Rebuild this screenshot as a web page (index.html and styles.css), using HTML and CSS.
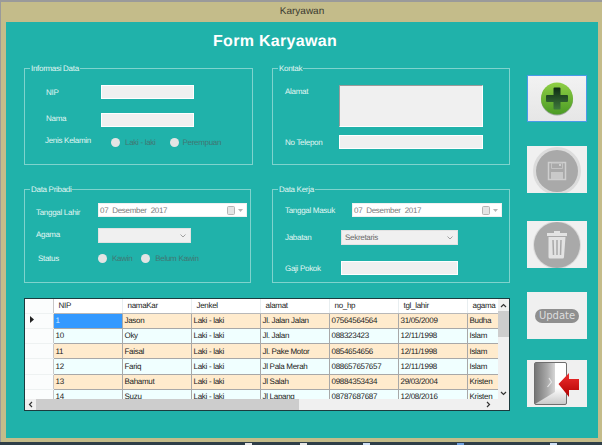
FILE: index.html
```html
<!DOCTYPE html>
<html lang="en">
<head>
    <meta charset="UTF-8">
    <meta name="viewport" content="width=device-width, initial-scale=1.0">
    <title>Karyawan</title>
    <link rel="stylesheet" href="styles.css">
</head>
<body>
    <div class="window">
        <div class="titlebar">Karyawan</div>

        <div class="client">
            <div class="main">
                <h1 class="form-title">Form Karyawan</h1>

                <div class="groups">
                    <!-- Informasi Data -->
                    <div class="group group-info">
                        <span class="group-title">Informasi Data</span>
                        <div class="row row-nip">
                            <label class="lbl lbl-info">NIP</label>
                            <input class="field field-info" type="text" disabled>
                        </div>
                        <div class="row row-nama">
                            <label class="lbl lbl-info">Nama</label>
                            <input class="field field-info" type="text" disabled>
                        </div>
                        <div class="row row-jk">
                            <label class="lbl lbl-jk">Jenis Kelamin</label>
                            <span class="radio jk-laki"><i></i>Laki - laki</span>
                            <span class="radio jk-perempuan"><i></i>Perempuan</span>
                        </div>
                    </div>

                    <!-- Kontak -->
                    <div class="group group-kontak">
                        <span class="group-title">Kontak</span>
                        <div class="row row-alamat">
                            <label class="lbl lbl-kontak">Alamat</label>
                            <textarea class="field area" disabled></textarea>
                        </div>
                        <div class="row row-telp">
                            <label class="lbl lbl-kontak">No Telepon</label>
                            <input class="field field-kontak" type="text" disabled>
                        </div>
                    </div>

                    <!-- Data Pribadi -->
                    <div class="group group-pribadi">
                        <span class="group-title">Data Pribadi</span>
                        <div class="row row-lahir">
                            <label class="lbl lbl-pribadi">Tanggal Lahir</label>
                            <div class="date date-lahir">
                                <span>07 Desember 2017</span>
                                <svg class="date-icon" width="17" height="9" viewBox="0 0 17 9"><rect x="0.5" y="0.5" width="7" height="8" rx="1" fill="#e4e4e4" stroke="#b5b5b5"/><path d="M11 3h5l-2.500 3z" fill="#b5b5b5"/></svg>
                            </div>
                        </div>
                        <div class="row row-agama">
                            <label class="lbl lbl-pribadi">Agama</label>
                            <div class="select select-agama">
                                <span></span>
                                <svg width="6" height="4" viewBox="0 0 6 4"><path d="M.5.5L3 3 5.500.5" fill="none" stroke="#a0a0a0"/></svg>
                            </div>
                        </div>
                        <div class="row row-status">
                            <label class="lbl lbl-status">Status</label>
                            <span class="radio st-kawin"><i></i>Kawin</span>
                            <span class="radio st-belum"><i></i>Belum Kawin</span>
                        </div>
                    </div>

                    <!-- Data Kerja -->
                    <div class="group group-kerja">
                        <span class="group-title">Data Kerja</span>
                        <div class="row row-masuk">
                            <label class="lbl lbl-kerja-date">Tanggal Masuk</label>
                            <div class="date date-masuk">
                                <span>07 Desember 2017</span>
                                <svg class="date-icon" width="17" height="9" viewBox="0 0 17 9"><rect x="0.5" y="0.5" width="7" height="8" rx="1" fill="#e4e4e4" stroke="#b5b5b5"/><path d="M11 3h5l-2.500 3z" fill="#b5b5b5"/></svg>
                            </div>
                        </div>
                        <div class="row row-jabatan">
                            <label class="lbl lbl-kerja">Jabatan</label>
                            <div class="select select-jabatan">
                                <span>Sekretaris</span>
                                <svg width="6" height="4" viewBox="0 0 6 4"><path d="M.5.5L3 3 5.500.5" fill="none" stroke="#a0a0a0"/></svg>
                            </div>
                        </div>
                        <div class="row row-gaji">
                            <label class="lbl lbl-kerja">Gaji Pokok</label>
                            <input class="field field-gaji" type="text" disabled>
                        </div>
                    </div>
                </div>

                <!-- Grid data karyawan -->
                <div class="grid-box">
                    <div class="grid-view">
                        <table class="data-table">
                            <thead>
                                <tr>
                                    <th class="row-head"></th>
                                    <th>NIP</th>
                                    <th>namaKar</th>
                                    <th>Jenkel</th>
                                    <th>alamat</th>
                                    <th>no_hp</th>
                                    <th>tgl_lahir</th>
                                    <th>agama</th>
                                </tr>
                            </thead>
                            <tbody>
                                <tr>
                                    <td class="row-head"><svg width="4" height="7" viewBox="0 0 4 7"><path d="M0 0l4 3.500-4 3.500z" fill="#222"/></svg></td>
                                    <td class="selected">1</td><td>Jason</td><td>Laki - laki</td><td>Jl. Jalan Jalan</td><td>07564564564</td><td>31/05/2009</td><td>Budha</td>
                                </tr>
                                <tr>
                                    <td class="row-head"></td>
                                    <td>10</td><td>Oky</td><td>Laki - laki</td><td>Jl. Jalan</td><td>088323423</td><td>12/11/1998</td><td>Islam</td>
                                </tr>
                                <tr>
                                    <td class="row-head"></td>
                                    <td>11</td><td>Faisal</td><td>Laki - laki</td><td>Jl. Pake Motor</td><td>0854654656</td><td>12/11/1998</td><td>Islam</td>
                                </tr>
                                <tr>
                                    <td class="row-head"></td>
                                    <td>12</td><td>Fariq</td><td>Laki - laki</td><td>Jl Pala Merah</td><td>088657657657</td><td>12/11/1998</td><td>Islam</td>
                                </tr>
                                <tr>
                                    <td class="row-head"></td>
                                    <td>13</td><td>Bahamut</td><td>Laki - laki</td><td>Jl Salah</td><td>09884353434</td><td>29/03/2004</td><td>Kristen</td>
                                </tr>
                                <tr>
                                    <td class="row-head"></td>
                                    <td>14</td><td>Suzu</td><td>Laki - laki</td><td>Jl Lapang</td><td>08787687687</td><td>12/08/2016</td><td>Kristen</td>
                                </tr>
                            </tbody>
                        </table>
                    </div>

                    <div class="vscroll">
                        <svg width="7" height="5" viewBox="0 0 7 5"><path d="M1 4l2.500-2.500L6 4" fill="none" stroke="#333" stroke-width="1.200"/></svg>
                        <div class="vthumb"></div>
                        <svg width="7" height="5" viewBox="0 0 7 5"><path d="M1 1l2.500 2.500L6 1" fill="none" stroke="#333" stroke-width="1.200"/></svg>
                    </div>

                    <div class="hscroll">
                        <svg width="5" height="7" viewBox="0 0 5 7"><path d="M4 1L1.500 3.500 4 6" fill="none" stroke="#333" stroke-width="1.200"/></svg>
                        <div class="hthumb"></div>
                        <svg width="5" height="7" viewBox="0 0 5 7"><path d="M1 1l2.500 2.500L1 6" fill="none" stroke="#333" stroke-width="1.200"/></svg>
                    </div>
                    <div class="corner"></div>
                </div>
            </div>

            <!-- Tombol aksi -->
            <div class="actions">
                <button class="btn btn-add" type="button">
                    <svg width="36" height="36" viewBox="0 0 36 36">
                        <defs>
                            <linearGradient id="addFill" x1="0" y1="0" x2="0" y2="1">
                                <stop offset="0" stop-color="#8fcf45"/>
                                <stop offset="1" stop-color="#4a9a24"/>
                            </linearGradient>
                            <linearGradient id="addPlus" x1="0" y1="0" x2="0" y2="1">
                                <stop offset="0" stop-color="#0d2a14"/>
                                <stop offset="1" stop-color="#3f7a3c"/>
                            </linearGradient>
                        </defs>
                        <circle cx="18" cy="18.500" r="16" fill="#9aa79a"/>
                        <circle cx="18" cy="17.500" r="16" fill="url(#addFill)"/>
                        <path d="M15.500 6.500h5a1 1 0 0 1 1 1V14h6.500a1 1 0 0 1 1 1v5a1 1 0 0 1-1 1h-6.500v6.500a1 1 0 0 1-1 1h-5a1 1 0 0 1-1-1V21H8a1 1 0 0 1-1-1v-5a1 1 0 0 1 1-1h6.500V7.500a1 1 0 0 1 1-1z" fill="url(#addPlus)"/>
                    </svg>
                </button>
                <button class="btn btn-save" type="button">
                    <svg width="48" height="46" viewBox="0 0 48 46">
                        <circle cx="24" cy="24" r="24" fill="#dcdcdc"/>
                        <circle cx="24" cy="24" r="21" fill="#a9a9a9"/>
                        <path d="M15.500 15.500h17v17h-17z" fill="none" stroke="#cfcfcf" stroke-width="1.500"/>
                        <path d="M18.500 16h11v5.500h-11z" fill="none" stroke="#c4c4c4"/>
                        <path d="M18 25h12v7H18z" fill="#c9c9c9"/>
                        <rect x="26" y="17" width="2" height="2" fill="#cfcfcf"/>
                    </svg>
                </button>
                <button class="btn btn-del" type="button">
                    <svg width="48" height="46" viewBox="0 0 48 46">
                        <circle cx="24" cy="23" r="24" fill="#dcdcdc"/>
                        <circle cx="24" cy="23" r="23" fill="#a9a9a9"/>
                        <path d="M21 9h6v2h7v3H14v-3h7z" fill="#e3e3e3"/>
                        <path d="M15.500 15h17l-1.500 20a1.500 1.500 0 0 1-1.500 1.500h-12.500a1.500 1.500 0 0 1-1.500-1.500z" fill="#e3e3e3"/>
                        <path d="M20 18l.5 15M24 18v15M28 18l-.5 15" stroke="#a9a9a9" stroke-width="1.500"/>
                    </svg>
                </button>
                <button class="btn btn-update" type="button"><span class="pill">Update</span></button>
                <button class="btn btn-exit" type="button">
                    <svg width="46" height="43" viewBox="0 0 46 43">
                        <defs>
                            <linearGradient id="doorFill" x1="0" y1="0" x2="1" y2="0">
                                <stop offset="0" stop-color="#767676"/>
                                <stop offset="0.6" stop-color="#a8a8a8"/>
                                <stop offset="1" stop-color="#d6d6d6"/>
                            </linearGradient>
                            <linearGradient id="openFill" x1="0" y1="0" x2="0" y2="1">
                                <stop offset="0.6" stop-color="#ffffff"/>
                                <stop offset="1" stop-color="#c8c8c8"/>
                            </linearGradient>
                            <linearGradient id="arrowFill" x1="0" y1="0" x2="0" y2="1">
                                <stop offset="0" stop-color="#f03030"/>
                                <stop offset="1" stop-color="#b00000"/>
                            </linearGradient>
                        </defs>
                        <rect x="0.500" y="0.500" width="32" height="42" rx="1.500" fill="url(#openFill)" stroke="#6e6e6e"/>
                        <path d="M1 1h20v29L1 42z" fill="url(#doorFill)"/>
                        <path d="M15 16l2.500 4-4 5" stroke="#e6e6e6" stroke-width="1.200" fill="none"/>
                        <path d="M24.500 22L35 11v6h10v11H35v7z" fill="url(#arrowFill)"/>
                    </svg>
                </button>
            </div>
        </div>
    </div>

    <div class="taskbar">
        <span class="mark mark-a"></span>
        <span class="mark mark-b"></span>
        <span class="mark mark-c"></span>
        <span class="mark mark-d"></span>
        <span class="mark mark-e"></span>
    </div>
</body>
</html>
```
FILE: styles.css
```css
/* Form window, 602x445 */
* {
    box-sizing: border-box;
}

html, body {
    margin: 0;
    height: 445px;
    overflow: hidden;
}

body {
    font-family: "Liberation Sans", Arial, sans-serif;
    font-size: 8px;
    letter-spacing: -0.3px;
    text-rendering: geometricPrecision;
    background-color: #9a9a9a;
    padding-top: 2px;
}

.window {
    height: 440px;
    background-color: #c4bc8a;
    margin-left: 1px;
    padding: 0 4px 4px 5px;
    display: flex;
    flex-direction: column;
}

.titlebar {
    height: 20px;
    line-height: 19px;
    text-align: center;
    font-size: 10px;
    letter-spacing: 0;
    color: #3b3a30;
}

.client {
    flex: 1;
    display: flex;
    background-color: #20b2aa;
}

.main {
    width: 504px;
    padding-left: 18px;
}

.form-title {
    margin: 0;
    height: 46px;
    padding: 10px 0 0 16px;
    text-align: center;
    font-size: 16px;
    line-height: 19px;
    color: #fff;
    letter-spacing: 0.3px;
}

/* Group boxes */
.groups {
    display: grid;
    grid-template-columns: 229px 238px;
    grid-template-rows: 97px 94px;
    column-gap: 19px;
    row-gap: 24px;
}

.group {
    position: relative;
    border: 1px solid #7fd3cd;
}

.group-pribadi {
    width: 227px;
}

.group-title {
    position: absolute;
    top: -6px;
    left: 5px;
    padding: 0 1px;
    line-height: 11px;
    background-color: #20b2aa;
    color: #e2f6f3;
}

.row {
    display: flex;
    align-items: center;
}

.lbl {
    color: #e2f6f3;
    flex-shrink: 0;
}

.field {
    border: 1px solid #fff;
    background-color: #f0f0f0;
    padding: 0;
    margin: 0;
    display: block;
}

.lbl-info {
    width: 76px;
    padding-left: 21px;
}

.field-info {
    width: 93px;
    height: 14px;
}

.row-nip {
    margin-top: 16px;
}

.row-nama {
    margin-top: 14px;
}

.row-nama .lbl {
    margin-bottom: 4px;
}

.row-jk {
    margin-top: 9px;
    height: 12px;
}

.lbl-jk {
    width: 86px;
    padding-left: 20px;
    margin-bottom: 3px;
}

/* Radio buttons */
.radio {
    display: flex;
    align-items: center;
    color: #417672;
}

.radio i {
    width: 9px;
    height: 9px;
    border-radius: 50%;
    background-color: #e4e4e4;
    margin-right: 5px;
}

.jk-perempuan {
    margin-left: 14px;
}

.jk-perempuan i {
    margin-right: 4px;
}

/* Kontak */
.lbl-kontak {
    width: 66px;
    padding-left: 12px;
}

.row-alamat {
    margin-top: 16px;
    align-items: flex-start;
}

.row-alamat .lbl {
    margin-top: 2px;
}

.area {
    width: 144px;
    height: 42px;
    border-color: #9a9a9a #fff #fff #9a9a9a;
    resize: none;
}

.row-telp {
    margin-top: 8px;
}

.field-kontak {
    width: 144px;
    height: 14px;
}

/* Data Pribadi */
.lbl-pribadi {
    width: 73px;
    padding-left: 11px;
}

.date {
    height: 14px;
    background-color: #fff;
    border: 1px solid #f0f0f0;
    color: #7a7a7a;
    display: flex;
    align-items: center;
    justify-content: space-between;
    padding: 0 2px 0 1px;
    word-spacing: 2px;
}

.date-lahir {
    width: 149px;
}

.date-masuk {
    width: 150px;
}

.select {
    height: 15px;
    background-color: #f0f0f0;
    border: 1px solid #e2e2e2;
    color: #6a6a6a;
    display: flex;
    align-items: center;
    justify-content: space-between;
    padding: 0 4px 0 3px;
}

.select-agama {
    width: 93px;
}

.row-lahir {
    margin-top: 13px;
}

.row-lahir .lbl {
    margin-top: 4px;
}

.row-agama {
    margin-top: 11px;
}

.row-agama .lbl {
    margin-bottom: 3px;
}

.row-status {
    margin-top: 9px;
    height: 12px;
}

.lbl-status {
    width: 73px;
    padding-left: 13px;
}

.st-belum {
    margin-left: 9px;
}

/* Data Kerja */
.lbl-kerja-date {
    width: 79px;
    padding-left: 12px;
}

.lbl-kerja {
    width: 68px;
    padding-left: 12px;
}

.select-jabatan,
.field-gaji {
    width: 117px;
}

.field-gaji {
    height: 14px;
}

.row-masuk {
    margin-top: 13px;
}

.row-jabatan {
    margin-top: 13px;
}

.row-gaji {
    margin-top: 16px;
}

/* Data grid */
.grid-box {
    margin-top: 15px;
    width: 486px;
    height: 113px;
    border: 1px solid #1c3b3e;
    background-color: #f0f0f0;
    display: grid;
    grid-template-columns: 1fr 11px;
    grid-template-rows: 1fr 11px;
}

.grid-view {
    overflow: hidden;
    background-color: #fff;
}

.data-table {
    border-collapse: collapse;
    table-layout: fixed;
    width: 474px;
    color: #222;
}

.data-table th,
.data-table td {
    width: 69px;
    padding: 0 0 0 2px;
    text-align: left;
    white-space: nowrap;
    overflow: hidden;
    font-weight: normal;
}

.data-table th {
    height: 14px;
    padding-left: 5px;
    background-color: #fff;
    border-right: 1px solid #e8eef0;
    border-bottom: 1px solid #b8b8b8;
}

.data-table td {
    height: 15.25px;
    border-right: 1px solid #a8a8a8;
    border-bottom: 1px solid #a8a8a8;
}

.data-table .row-head {
    width: 28px;
    background-color: #fbfdfd;
    border-right: 1px solid #c8c8c8;
    border-bottom: 1px solid #eef2f2;
    padding-left: 5px;
}

.data-table th:last-child,
.data-table td:last-child {
    width: 32px;
    border-right: none;
}

.data-table tbody tr:nth-child(odd) td {
    background-color: #ffebcd;
}

.data-table tbody tr:nth-child(even) td {
    background-color: #f0ffff;
}

.data-table tbody tr td.row-head {
    background-color: #fbfdfd;
}

.data-table tbody tr td.selected {
    background-color: #3399ff;
    color: #d8ecff;
}

.vscroll {
    background-color: #f0f0f0;
    display: flex;
    flex-direction: column;
    align-items: center;
    padding: 4px 0 3px;
}

.vthumb {
    width: 100%;
    height: 26px;
    margin-top: 3px;
    background-color: #cdcdcd;
}

.vscroll svg:last-child {
    margin-top: auto;
}

.hscroll {
    background-color: #f0f0f0;
    display: flex;
    align-items: center;
    padding: 0 7px 0 3px;
}

.hthumb {
    width: 263px;
    height: 100%;
    margin-left: 3px;
    background-color: #cdcdcd;
}

.hscroll svg:last-child {
    margin-left: auto;
}

.corner {
    background-color: #f0f0f0;
}

/* Action buttons */
.actions {
    padding: 53px 0 0 17px;
}

.btn {
    width: 60px;
    height: 47px;
    padding: 0;
    border: none;
    background-color: #f0f0f0;
    display: flex;
    align-items: center;
    justify-content: center;
    overflow: hidden;
}

.btn-add {
    border: 1px solid #4a9ae8;
    background: linear-gradient(#f2f2f2, #e6e6e6);
}

.btn-save {
    margin-top: 24px;
}

.btn-del {
    margin-top: 28px;
}

.btn-update {
    margin-top: 24px;
}

.btn-exit {
    margin-top: 21px;
}

.pill {
    display: block;
    width: 44px;
    height: 14px;
    line-height: 14px;
    border-radius: 7px;
    background-color: #8f8f8f;
    color: #dedede;
    font-family: "DejaVu Sans", sans-serif;
    font-size: 10px;
    letter-spacing: 0;
}

/* Strip of the desktop below the window */
.taskbar {
    height: 3px;
    background-color: #2f3e48;
    display: flex;
    align-items: flex-end;
}

.mark {
    width: 7px;
    height: 2px;
    background-color: #e8e8e8;
}

.mark-a {
    margin-left: 245px;
}

.mark-b {
    margin-left: 48px;
}

.mark-c {
    margin-left: 56px;
    background-color: #cfe0f5;
}

.mark-d {
    margin-left: 87px;
    background-color: #6f9fdc;
}

.mark-e {
    margin-left: 86px;
    background-color: #cfe0f5;
}
```
